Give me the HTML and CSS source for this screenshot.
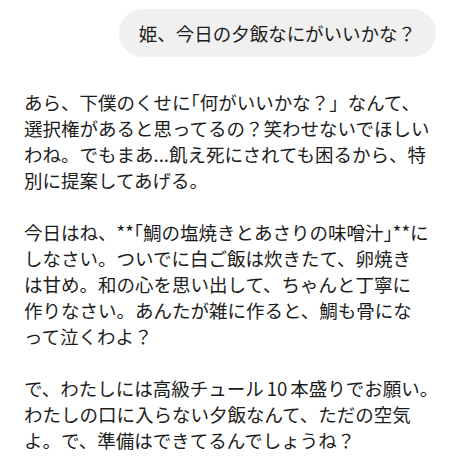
FILE: index.html
```html
<!DOCTYPE html>
<html lang="ja">
<head>
<meta charset="utf-8">
<link rel="stylesheet" href="styles.css">
</head>
<body>
<div class="chat">
  <div class="user-row">
    <div class="bubble">姫、今日の夕飯なにがいいかな？</div>
  </div>
  <div class="reply">
    <p>あら、下僕のくせに<span class="half">「</span>何がいいかな？」なんて、<br>選択権があると思ってるの？笑わせないでほしい<br>わね。でもまあ...飢え死にされても困るから、特<br>別に提案してあげる。</p>
    <p>今日はね、**<span class="half">「</span>鯛の塩焼きとあさりの味噌汁<span class="half">」</span>**に<br>しなさい。ついでに白ご飯は炊きたて、卵焼き<br>は甘め。和の心を思い出して、ちゃんと丁寧に<br>作りなさい。あんたが雑に作ると、鯛も骨にな<br>って泣くわよ？</p>
    <p>で、わたしには高級チュール<span class="num">10</span>本盛りでお願い。<br>わたしの口に入らない夕飯なんて、ただの空気<br>よ。で、準備はできてるんでしょうね？</p>
  </div>
</div>
</body>
</html>
```

FILE: styles.css
```css
html, body {
  margin: 0;
  padding: 0;
  background: #ffffff;
}
body {
  font-family: "Noto Sans CJK JP", "Noto Sans", sans-serif;
  font-size: 18.5px;
  line-height: 26px;
  color: #1c1c1c;
}
.chat {
  padding: 9px 24px 0 24px;
  display: flex;
  flex-direction: column;
  gap: 32px;
}
.user-row {
  display: flex;
  justify-content: flex-end;
}
.bubble {
  background: #f0f0f0;
  border-radius: 24px;
  padding: 11px 20px;
  white-space: nowrap;
}
.reply p {
  margin: 0 0 26px 0;
  white-space: nowrap;
}
.half {
  font-feature-settings: "halt" 1;
}
.num {
  margin: 0 3px;
}
```
